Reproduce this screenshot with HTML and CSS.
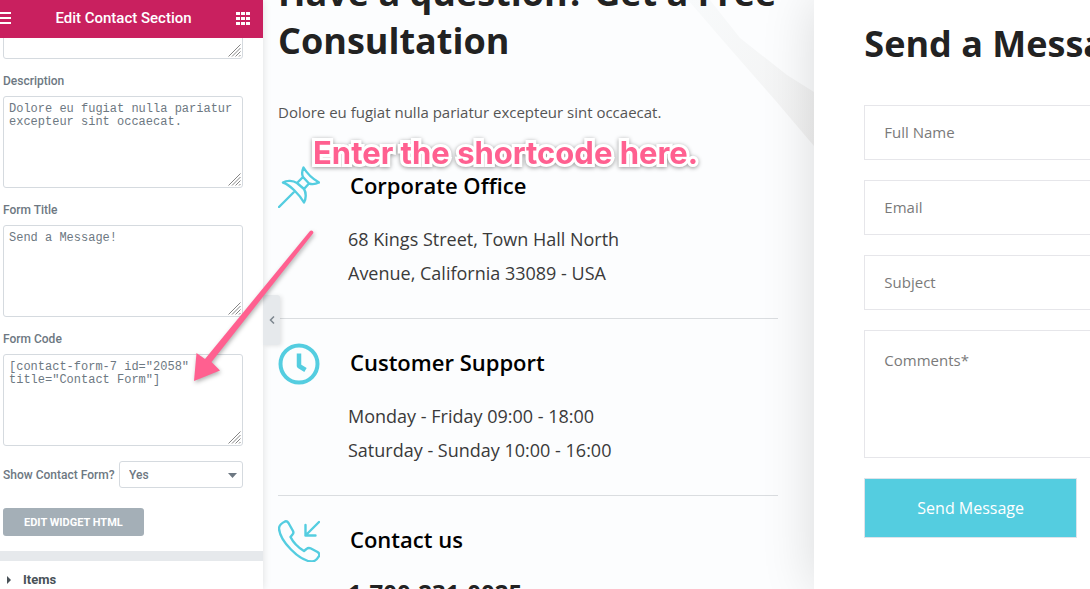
FILE: index.html
```html
<!DOCTYPE html>
<html lang="en">
<head>
<meta charset="utf-8">
<meta name="viewport" content="width=device-width, initial-scale=1">
<title>Edit Contact Section</title>
<link rel="stylesheet" href="styles.css">
</head>
<body>
<svg class="defs" aria-hidden="true">
  <symbol id="grip" viewBox="0 0 13 13"><path d="M0.500 12.500 12.500 .5M4 12.500 12.500 4M7.500 12.500 12.500 7.500M11 12.500 12.500 11" fill="none" stroke="#858585" stroke-width="1"/></symbol>
</svg>
<div class="editor">
  <aside class="panel">
    <header class="panel-header">
      <button class="icon-button" aria-label="Menu"><svg width="11" height="12" viewBox="0 0 11 12"><path d="M0 1h11M0 6h11M0 11h11" stroke="#fff" stroke-width="2"/></svg></button>
      <h1 class="panel-title">Edit Contact Section</h1>
      <button class="icon-button" aria-label="Widgets"><svg width="14" height="13" viewBox="0 0 14 13"><path d="M0 0h4v3H0zM5 0h4v3H5zM10 0h4v3h-4zM0 5h4v3H0zM5 5h4v3H5zM10 5h4v3h-4zM0 10h4v3H0zM5 10h4v3H5zM10 10h4v3h-4z" fill="#fff"/></svg></button>
    </header>
    <div class="panel-body">
      <div class="fields">
        <div class="area area-first"><textarea aria-label="Title"></textarea><svg class="grip"><use href="#grip"/></svg></div>
        <label class="label" for="description">Description</label>
        <div class="area"><textarea id="description">Dolore eu fugiat nulla pariatur excepteur sint occaecat.</textarea><svg class="grip"><use href="#grip"/></svg></div>
        <label class="label" for="form-title">Form Title</label>
        <div class="area"><textarea id="form-title">Send a Message!</textarea><svg class="grip"><use href="#grip"/></svg></div>
        <label class="label" for="form-code">Form Code</label>
        <div class="area"><textarea id="form-code">[contact-form-7 id="2058" title="Contact Form"]</textarea><svg class="grip"><use href="#grip"/></svg></div>
        <div class="select-row">
          <label class="label" for="show-form">Show Contact Form?</label>
          <div class="select-box">
            <select id="show-form"><option>Yes</option><option>No</option></select>
            <svg class="caret" width="9" height="5" viewBox="0 0 9 5"><path d="M0 0h9L4.500 5z" fill="#6d7882"/></svg>
          </div>
        </div>
        <button class="edit-html">EDIT WIDGET HTML</button>
      </div>
      <button class="section-toggle"><svg width="4" height="8" viewBox="0 0 4 8"><path d="M0 0l4 4-4 4z" fill="#495157"/></svg>Items</button>
    </div>
    <button class="collapse" aria-label="Collapse panel"><svg width="6" height="8" viewBox="0 0 6 8"><path d="M5 .5 1.500 4 5 7.500" fill="none" stroke="#7b858d" stroke-width="1.500"/></svg></button>
  </aside>

  <main class="info">
    <svg class="ribbon" width="126" height="146" viewBox="0 0 126 146" aria-hidden="true"><defs><linearGradient id="fade" x1="0" y1="0" x2="1" y2="1"><stop offset="0" stop-color="#f8fafb"/><stop offset="1" stop-color="#f2f2f2"/></linearGradient></defs><path d="M0 0H22L52 38 99 75 126 92V146L87 100 38 44z" fill="url(#fade)"/></svg>
    <h2 class="heading">Have a question? Get a Free Consultation</h2>
    <p class="lead">Dolore eu fugiat nulla pariatur excepteur sint occaecat.</p>
    <section class="item">
      <svg class="item-icon" viewBox="0 0 42 42"><g fill="none" stroke="#54cde0" stroke-width="2.400" stroke-linecap="round" stroke-linejoin="round"><path d="M1 41 15.500 26.500M25.500 1.500C24 5 23.500 8 25 11L19 17C15 14.500 9 14 5 16.500C12 19 21 28 26 36.500C28 33 28.500 27 26 23L31 17.500C34 18.500 37 18.500 41 16.500C35 13 29 7.500 25.500 1.500zM19 17 26 23M25 11 31 17.500"/></g></svg>
      <div class="item-text"><h3>Corporate Office</h3><p>68 Kings Street, Town Hall North<br>Avenue, California 33089 - USA</p></div>
    </section>
    <section class="item">
      <svg class="item-icon" viewBox="0 0 42 42"><circle cx="21" cy="21" r="18.500" fill="none" stroke="#54cde0" stroke-width="4"/><path d="M21 10.500V23L27.500 27" fill="none" stroke="#54cde0" stroke-width="4.500" stroke-linejoin="round"/></svg>
      <div class="item-text"><h3>Customer Support</h3><p>Monday - Friday 09:00 - 18:00<br>Saturday - Sunday 10:00 - 16:00</p></div>
    </section>
    <section class="item">
      <svg class="item-icon" viewBox="0 0 42 42"><g fill="none" stroke="#54cde0" stroke-width="2.400" stroke-linecap="round" stroke-linejoin="round"><path d="M7 1.500C4 3 1 5.500 1 8.500C2 21 21 41 34 41.500C37 41.500 39.500 38.500 41 36C42 34 41 33 39.500 32L33 28.500C31 27.500 29.500 28 28.500 29L26 31C21 28 15 22 12.500 17L14.500 14.500C15.500 13.500 15.500 12 15 11L10.500 3C9.500 1.500 8.500 1 7 1.500zM41 2 27.500 15.500M27.500 5V15.500H37.500"/></g></svg>
      <div class="item-text"><h3>Contact us</h3><p class="phone">1-700-231-0025</p></div>
    </section>
  </main>

  <section class="contact">
    <h2 class="heading">Send a Message!</h2>
    <form class="contact-form">
      <input type="text" placeholder="Full Name" aria-label="Full Name">
      <input type="email" placeholder="Email" aria-label="Email">
      <input type="text" placeholder="Subject" aria-label="Subject">
      <textarea placeholder="Comments*" aria-label="Comments"></textarea>
      <button type="button">Send Message</button>
    </form>
  </section>

  <div class="callout">Enter the shortcode here.</div>
  <svg class="arrow" width="130" height="164" viewBox="0 0 130 164" aria-hidden="true"><path d="M121 4C122.500 2.500 125.500 4.500 124 6.500L22.500 135 31 143.500 5 154 7.500 126 16 132z" fill="#ff6090"/></svg>
</div>
</body>
</html>
```
FILE: styles.css
```css
* { box-sizing: border-box; }
body, h1, h2, h3, p { margin: 0; }
body { font-family: "Open Sans", sans-serif; background: #fff; }
button, input, textarea, select { font: inherit; margin: 0; }
button { border: 0; background: none; padding: 0; }
svg { display: block; }
.defs { position: absolute; width: 0; height: 0; }

.editor {
  position: relative;
  display: grid;
  grid-template-columns: 263px minmax(0, 2fr) minmax(0, 1fr);
  grid-template-rows: 100%;
  height: 100vh;
  overflow: hidden;
}

.panel {
  position: relative;
  z-index: 2;
  min-height: 0;
  display: flex;
  flex-direction: column;
  background: #fff;
  box-shadow: 0 0 8px rgba(0, 0, 0, 0.12);
  font-family: Roboto, sans-serif;
  color: #6d7882;
}
.panel-header {
  flex: none;
  height: 38px;
  display: flex;
  align-items: center;
  justify-content: space-between;
  padding: 0 13px 2px 0;
  background: #c9205f;
}
.panel-title { font-size: 15px; font-weight: 500; line-height: 20px; color: #fff; }
.panel-body { flex: 1; min-height: 0; overflow: hidden; }
.fields { padding: 0 20px 15px 3px; border-bottom: 10px solid #e6e9ec; }
.label { display: block; font-size: 12px; font-weight: 500; line-height: 16px; }
.area { position: relative; margin: 7px 0 14px; }
.area-first { margin-top: -71px; }
.area textarea {
  display: block;
  width: 100%;
  height: 92px;
  padding: 6px 5px;
  border: 1px solid #d5dadf;
  border-radius: 3px;
  resize: none;
  overflow: hidden;
  font-family: "Liberation Mono", monospace;
  font-size: 12px;
  font-weight: 400;
  line-height: 13px;
  color: #6d7882;
}
.grip { position: absolute; right: 2px; bottom: 2px; width: 13px; height: 13px; }
.select-row { display: flex; align-items: center; justify-content: space-between; margin: 15px 0 20px; }
.select-box { position: relative; width: 124px; }
.select-box select {
  display: block;
  width: 100%;
  height: 27px;
  padding: 0 9px;
  appearance: none;
  border: 1px solid #d5dadf;
  border-radius: 3px;
  background: #fff;
  font-size: 12px;
  font-weight: 500;
  color: #6d7882;
}
.caret { position: absolute; right: 6px; top: 12px; }
.edit-html {
  display: block;
  height: 28px;
  padding: 0 21px;
  border-radius: 3px;
  background: #a4afb7;
  color: #fff;
  font-size: 11px;
  font-weight: 700;
}
.section-toggle {
  display: flex;
  align-items: center;
  gap: 12px;
  width: 100%;
  padding: 10px 7px;
  font-size: 13px;
  font-weight: 700;
  line-height: 18px;
  color: #495157;
}
.collapse {
  position: absolute;
  left: 100%;
  top: 50%;
  width: 17px;
  height: 50px;
  display: grid;
  place-items: center;
  border-radius: 0 3px 3px 0;
  background: #e6e9ec;
  box-shadow: 2px 1px 4px rgba(0, 0, 0, 0.1);
}

.info { position: relative; min-width: 0; padding: 0 36px 0 15px; background: #fcfdfe; }
.ribbon { position: absolute; right: 0; top: 0; }
.heading { font-size: 36px; font-weight: 700; line-height: 48px; color: #222; }
.info .heading { position: relative; margin-top: -31px; }
.lead { margin: 35px 0 18px; font-size: 15px; line-height: 24px; color: #555; }
.item {
  display: flex;
  gap: 28px;
  padding: 24px 0 28px;
  border-bottom: 1px solid #dadde0;
}
.item-icon { flex: none; width: 42px; height: 42px; }
.item-text h3 { margin: 5px 0 23px 2px; font-size: 22px; font-weight: 600; line-height: 28px; color: #000; }
.item-text p { font-size: 18px; line-height: 34px; color: #3a3a3a; }
.item-text .phone { font-size: 24px; font-weight: 700; color: #222; }

.contact {
  position: relative;
  z-index: 1;
  min-width: 0;
  padding: 20px 0 0 50px;
  background: #fff;
  box-shadow: 0 0 50px rgba(0, 0, 0, 0.14);
}
.contact .heading { white-space: nowrap; }
.contact-form { display: grid; gap: 20px; margin: 37px -20px 0 0; }
.contact-form input, .contact-form textarea {
  display: block;
  width: 100%;
  height: 55px;
  padding: 0 19px 2px;
  border: 1px solid #e6e6ea;
  font-size: 15px;
  line-height: 24px;
}
.contact-form textarea { height: 128px; padding: 17px 19px; resize: none; }
.contact-form ::placeholder { color: #7a7a7a; opacity: 1; }
.contact-form button {
  justify-self: start;
  height: 60px;
  padding: 0 52px;
  border: 1px solid #dde3ea;
  background: #54cde0;
  color: #fff;
  font-size: 16px;
  font-weight: 500;
}

.callout {
  position: absolute;
  z-index: 3;
  left: 313px;
  top: 135px;
  font: 700 31px/36px Inter, sans-serif;
  color: #ff6090;
  white-space: nowrap;
  -webkit-text-stroke: 6px #fff;
  paint-order: stroke fill;
  filter: drop-shadow(0 1px 2px rgba(0, 0, 0, 0.4));
}
.arrow {
  position: absolute;
  z-index: 3;
  left: 189px;
  top: 227px;
  overflow: visible;
  filter: drop-shadow(1px 2px 2px rgba(0, 0, 0, 0.3));
}
```
